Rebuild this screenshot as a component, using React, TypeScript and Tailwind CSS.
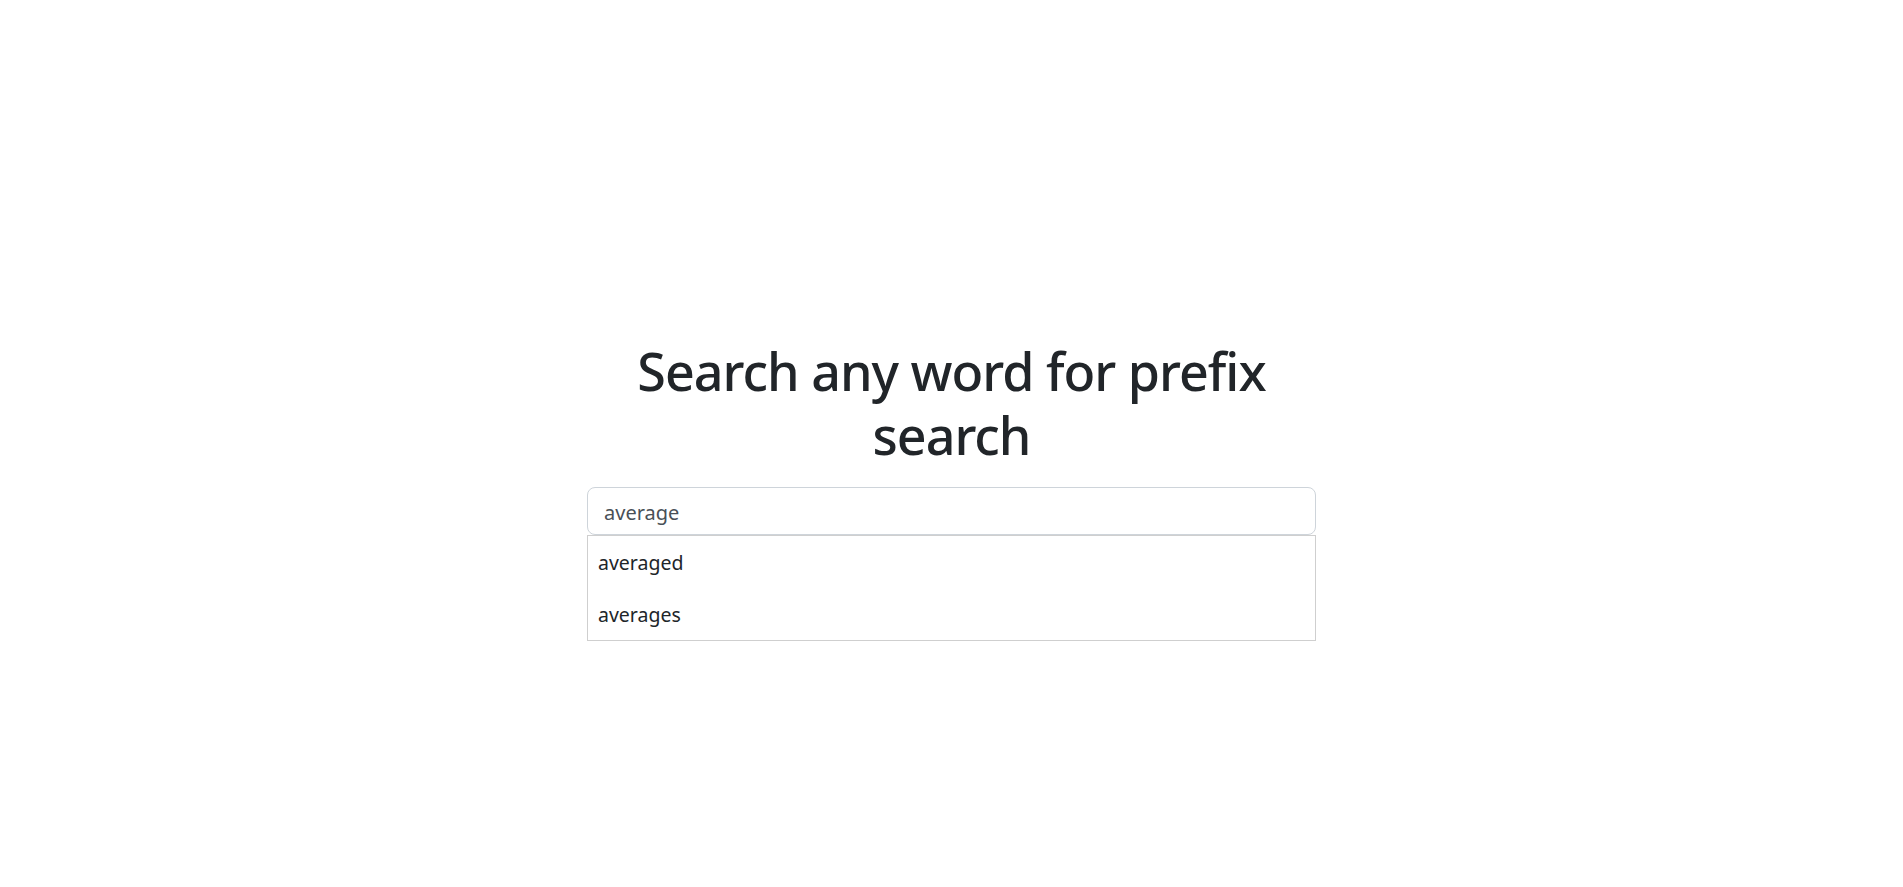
const suggestions = ["averaged", "averages"]

export default function App() {
  return (
    <div
      className="flex min-h-screen w-full items-center justify-center bg-white pb-[14px] text-[#212529]"
      style={{ fontFamily: '"Noto Sans", "Open Sans", sans-serif' }}
    >
      <div className="flex w-[729px] flex-col items-stretch">
        <h1 className="mb-[20px] text-center text-[52px] font-medium leading-[64px] tracking-[-1px]">
          Search any word for prefix search
        </h1>
        <div className="relative">
          <input
            className="h-12 w-full rounded-lg border border-[#ced4da] bg-white px-4 pt-[4px] text-[20px] text-[#495057] outline-none"
            defaultValue="average"
          />
          {/* lista de sugerencias */}
          <ul className="absolute left-0 right-0 top-12 border border-[#cfcfcf] bg-white">
            {suggestions.map((s) => (
              <li key={s} className="h-[52px] px-[10px] pt-[12px] text-[19.5px] leading-[30px] text-[#212529]">
                {s}
              </li>
            ))}
          </ul>
        </div>
      </div>
    </div>
  )
}
